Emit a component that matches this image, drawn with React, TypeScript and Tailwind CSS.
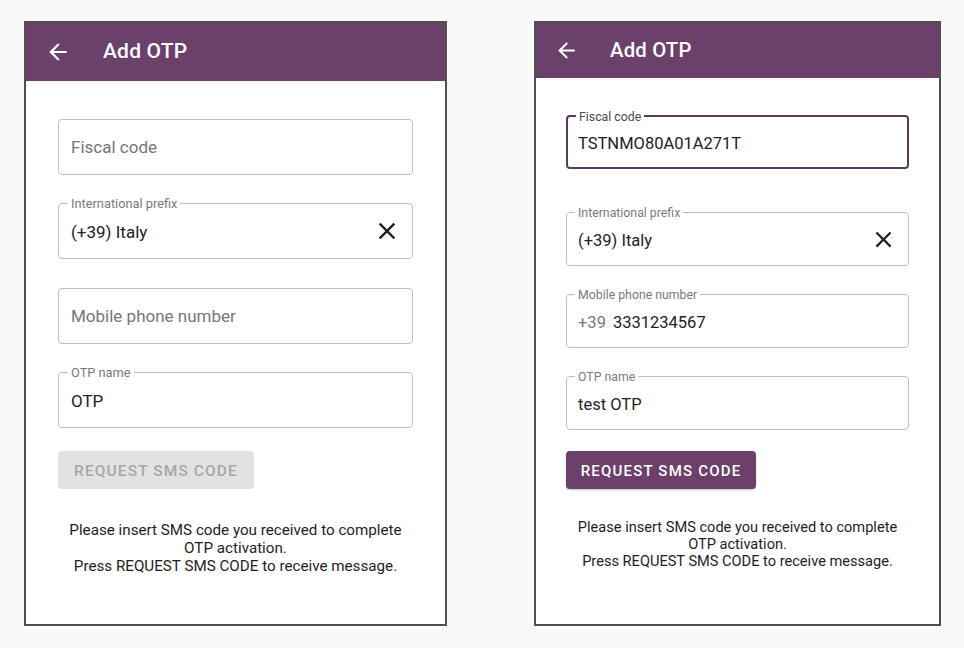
import React from "react";

const arrowPath = "M20 11H7.83l5.59-5.59L12 4l-8 8 8 8 1.41-1.41L7.83 13H20v-2z";
const closePath =
  "M19 6.41L17.59 5 12 10.59 6.41 5 5 6.41 10.59 12 5 17.59 6.41 19 12 13.41 17.59 19 19 17.59 13.41 12z";

type FieldProps = {
  big: boolean;
  label: string;
  value?: string;
  prefix?: string;
  clear?: boolean;
  focused?: boolean;
};

function Field({ big, label, value, prefix, clear, focused }: FieldProps) {
  const box = big ? "h-[56px] px-[12px] text-[17px]" : "h-[54px] px-[11px] text-[16.5px]";
  const border = focused ? "border-2 border-[#5b3a5b]" : "border border-[#bdbdbd]";
  const labelCls = big ? "text-[12.8px] left-[9px]" : "text-[12.3px] left-[8px]";
  const filled = value !== undefined;

  return (
    <div className={`relative flex items-center rounded-[4px] bg-white ${box} ${border}`}>
      {filled && (
        <span
          className={`absolute top-0 -translate-y-1/2 bg-white px-[3px] leading-none ${labelCls} ${
            focused ? "text-[#4a4a4a]" : "text-[#7a7a7a]"
          }`}
        >
          {label}
        </span>
      )}
      {filled ? (
        <div className={`flex-1 pt-[4px] text-[#222] ${focused ? "-ml-px" : ""}`}>
          {prefix && <span className="mr-[7px] text-[#7a7a7a]">{prefix}</span>}
          {value}
        </div>
      ) : (
        <div className="flex-1 pt-[1px] text-[#767676]">{label}</div>
      )}
      {clear && (
        <svg
          viewBox="0 0 24 24"
          className={big ? "h-[28px] w-[28px] -mr-px" : "h-[27px] w-[27px]"}
          fill="#1f1f1f"
        >
          <path d={closePath} />
        </svg>
      )}
    </div>
  );
}

function Phone({ big }: { big: boolean }) {
  return (
    <div
      className={`flex h-[605px] flex-col border-2 border-[#505050] bg-white ${
        big ? "w-[423px]" : "w-[407px]"
      }`}
    >
      <div
        className={`flex items-center bg-[#6b406b] text-white ${
          big ? "h-[58px] pl-[19px]" : "h-[55px] pl-[18px]"
        }`}
      >
        <svg viewBox="0 0 24 24" className={big ? "h-[26px] w-[26px]" : "h-[25px] w-[25px]"} fill="#ffffff">
          <path d={arrowPath} />
        </svg>
        <span
          className={`font-medium tracking-[0.2px] ${
            big ? "ml-[32px] text-[21px]" : "ml-[31px] text-[20.3px]"
          }`}
        >
          Add OTP
        </span>
      </div>

      {big ? (
        <div className="flex flex-col px-[32px] pt-[38px]">
          <Field big label="Fiscal code" />
          <div className="mt-[28px]">
            <Field big label="International prefix" value="(+39) Italy" clear />
          </div>
          <div className="mt-[29px]">
            <Field big label="Mobile phone number" />
          </div>
          <div className="mt-[28px]">
            <Field big label="OTP name" value="OTP" />
          </div>
          <button className="mt-[23px] h-[38px] w-[196px] rounded-[4px] bg-[#e2e2e2] pt-[4px] text-[15.5px] font-medium tracking-[1.1px] text-[#a8a8a8]">
            REQUEST SMS CODE
          </button>
          <p className="mt-[32px] text-center text-[15.2px] leading-[18px] text-[#1e1e1e]">
            Please insert SMS code you received to complete
            <br />
            OTP activation.
            <br />
            Press REQUEST SMS CODE to receive message.
          </p>
        </div>
      ) : (
        <div className="flex flex-col px-[30px] pt-[37px]">
          <Field big={false} label="Fiscal code" value="TSTNMO80A01A271T" focused />
          <div className="mt-[43px]">
            <Field big={false} label="International prefix" value="(+39) Italy" clear />
          </div>
          <div className="mt-[28px]">
            <Field big={false} label="Mobile phone number" value="3331234567" prefix="+39" />
          </div>
          <div className="mt-[28px]">
            <Field big={false} label="OTP name" value="test OTP" />
          </div>
          <button className="mt-[21px] h-[38px] w-[190px] rounded-[4px] bg-[#6b406b] pt-[2px] text-[15px] font-medium tracking-[1.2px] text-white shadow-[0_1px_2px_rgba(0,0,0,0.25)]">
            REQUEST SMS CODE
          </button>
          <p className="mt-[30px] text-center text-[14.6px] leading-[17px] text-[#1e1e1e]">
            Please insert SMS code you received to complete
            <br />
            OTP activation.
            <br />
            Press REQUEST SMS CODE to receive message.
          </p>
        </div>
      )}
    </div>
  );
}

export default function App() {
  return (
    <div className="flex h-[648px] w-[964px] items-start bg-[#f9f9f9] pl-[24px] pt-[21px] font-['Roboto',sans-serif]">
      <Phone big />
      <div className="ml-[87px]">
        <Phone big={false} />
      </div>
    </div>
  );
}
